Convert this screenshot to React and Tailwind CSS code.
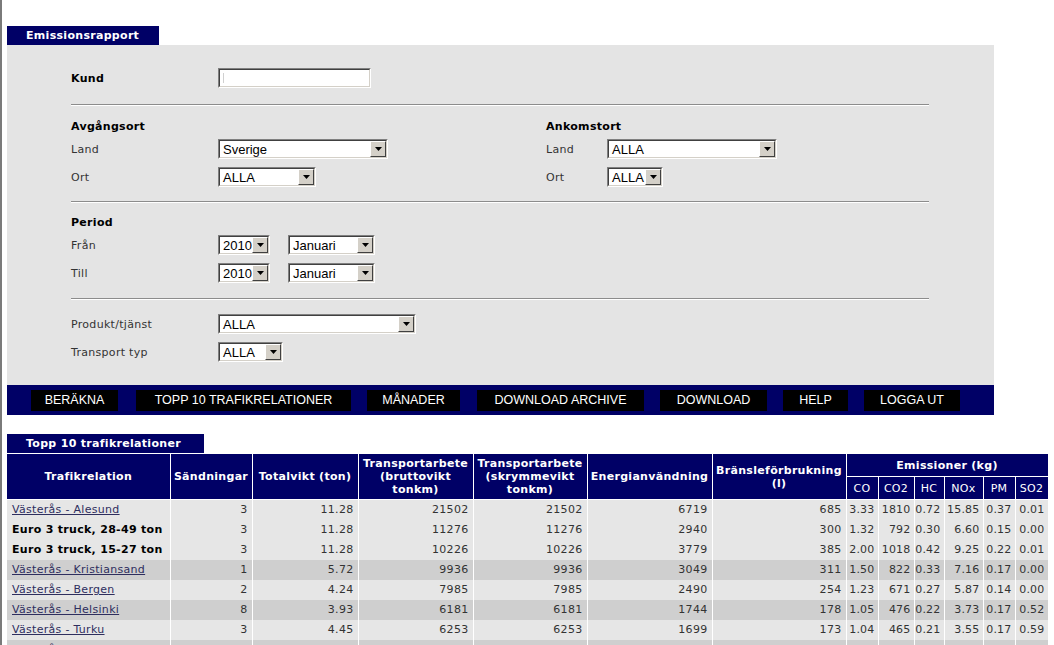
import React from "react";

function Select({ w, text }) {
  return (
    <div className={"h-[20px] border border-t-[#808080] border-l-[#808080] border-b-white border-r-white " + w}>
      <div className="flex h-full border border-t-[#404040] border-l-[#404040] border-b-[#d4d0c8] border-r-[#d4d0c8] bg-white">
        <span className="flex-1 overflow-hidden whitespace-nowrap pl-[3px] font-['Liberation_Sans',sans-serif] text-[13px] leading-[17px] tracking-normal text-black">
          {text}
        </span>
        <div className="flex h-[16px] w-[16px] shrink-0 items-center justify-center border border-t-white border-l-white border-b-[#404040] border-r-[#404040] bg-[#d4d0c8]">
          <svg width="7" height="4" viewBox="0 0 7 4">
            <path d="M0 0h7L3.5 4z" fill="#000" />
          </svg>
        </div>
      </div>
    </div>
  );
}

function Hr() {
  return <div className="h-[2px] w-[858px] border-t border-t-[#8c8c8c] border-b border-b-white" />;
}

function Row({ label, children, labelW = "w-[147px]" }) {
  return (
    <div className="flex h-[20px] items-center">
      <div className={"shrink-0 pt-[2px] text-[11px] text-[#333] " + labelW}>{label}</div>
      {children}
    </div>
  );
}

const buttons = [
  { t: "BERÄKNA", c: "w-[87px]" },
  { t: "TOPP 10 TRAFIKRELATIONER", c: "w-[215px] ml-[18px]" },
  { t: "MÅNADER", c: "w-[93px] ml-[16px]" },
  { t: "DOWNLOAD ARCHIVE", c: "w-[167px] ml-[17px]" },
  { t: "DOWNLOAD", c: "w-[107px] ml-[16px]" },
  { t: "HELP", c: "w-[65px] ml-[16px]" },
  { t: "LOGGA UT", c: "w-[96px] ml-[16px]" },
];

const rows = [
  { n: "Västerås - Alesund", link: true, dark: false, v: ["3", "11.28", "21502", "21502", "6719", "685", "3.33", "1810", "0.72", "15.85", "0.37", "0.01"] },
  { n: "Euro 3 truck, 28-49 ton", link: false, dark: false, v: ["3", "11.28", "11276", "11276", "2940", "300", "1.32", "792", "0.30", "6.60", "0.15", "0.00"] },
  { n: "Euro 3 truck, 15-27 ton", link: false, dark: false, v: ["3", "11.28", "10226", "10226", "3779", "385", "2.00", "1018", "0.42", "9.25", "0.22", "0.01"] },
  { n: "Västerås - Kristiansand", link: true, dark: true, v: ["1", "5.72", "9936", "9936", "3049", "311", "1.50", "822", "0.33", "7.16", "0.17", "0.00"] },
  { n: "Västerås - Bergen", link: true, dark: false, v: ["2", "4.24", "7985", "7985", "2490", "254", "1.23", "671", "0.27", "5.87", "0.14", "0.00"] },
  { n: "Västerås - Helsinki", link: true, dark: true, v: ["8", "3.93", "6181", "6181", "1744", "178", "1.05", "476", "0.22", "3.73", "0.17", "0.52"] },
  { n: "Västerås - Turku", link: true, dark: false, v: ["3", "4.45", "6253", "6253", "1699", "173", "1.04", "465", "0.21", "3.55", "0.17", "0.59"] },
  { n: "Västerås - Tallinn", link: true, dark: true, v: ["2", "3.10", "5120", "5120", "1420", "145", "0.85", "380", "0.18", "2.90", "0.14", "0.40"] },
];

const th = "bg-[#000066] border border-white text-white font-bold text-[11px] leading-[13px] text-center align-middle px-0";
const thSub = "bg-[#000066] border border-white text-white font-normal text-[11px] leading-[13px] text-center align-middle px-0";

export default function App() {
  return (
    <div className="h-[645px] w-full overflow-hidden border-l-2 border-l-[#7a7a7a] bg-white pl-[5px] pt-[26px] font-['DejaVu_Sans',Verdana,sans-serif] tracking-[0.3px]">
      {/* Tab */}
      <div className="flex h-[19px] w-[152px] items-center bg-[#000066] pl-[19px] pt-[1px] text-[11px] font-bold text-white">
        Emissionsrapport
      </div>

      {/* Gray panel */}
      <div className="h-[340px] w-[987px] bg-[#e4e4e4] pl-[64px] pt-[23px]">
        <div className="flex h-[20px] items-center">
          <div className="w-[147px] pt-[2px] text-[11px] font-bold text-black">Kund</div>
          <div className="h-[20px] w-[153px] border border-t-[#808080] border-l-[#808080] border-b-white border-r-white">
            <div className="flex h-full items-center border border-t-[#404040] border-l-[#404040] border-b-[#d4d0c8] border-r-[#d4d0c8] bg-white pl-[3px]">
              <div className="h-[10px] w-px bg-[#d0d0d0]" />
            </div>
          </div>
        </div>

        <div className="mt-[16px]">
          <Hr />
        </div>

        <div className="flex">
          <div className="w-[475px]">
            <div className="mt-[10px] flex h-[20px] items-center pt-[2px] text-[11px] font-bold text-black">Avgångsort</div>
            <div className="mt-[3px]">
              <Row label="Land">
                <Select w="w-[170px]" text="Sverige" />
              </Row>
            </div>
            <div className="mt-[8px]">
              <Row label="Ort">
                <Select w="w-[98px]" text="ALLA" />
              </Row>
            </div>
          </div>
          <div>
            <div className="mt-[10px] flex h-[20px] items-center pt-[2px] text-[11px] font-bold text-black">Ankomstort</div>
            <div className="mt-[3px]">
              <Row label="Land" labelW="w-[61px]">
                <Select w="w-[170px]" text="ALLA" />
              </Row>
            </div>
            <div className="mt-[8px]">
              <Row label="Ort" labelW="w-[61px]">
                <Select w="w-[56px]" text="ALLA" />
              </Row>
            </div>
          </div>
        </div>

        <div className="mt-[14px]">
          <Hr />
        </div>

        <div className="mt-[9px] flex h-[20px] items-center pt-[2px] text-[11px] font-bold text-black">Period</div>
        <div className="mt-[3px]">
          <Row label="Från">
            <Select w="w-[52px]" text="2010" />
            <div className="ml-[18px]">
              <Select w="w-[87px]" text="Januari" />
            </div>
          </Row>
        </div>
        <div className="mt-[8px]">
          <Row label="Till">
            <Select w="w-[52px]" text="2010" />
            <div className="ml-[18px]">
              <Select w="w-[87px]" text="Januari" />
            </div>
          </Row>
        </div>

        <div className="mt-[15px]">
          <Hr />
        </div>

        <div className="mt-[14px]">
          <Row label="Produkt/tjänst">
            <Select w="w-[198px]" text="ALLA" />
          </Row>
        </div>
        <div className="mt-[8px]">
          <Row label="Transport typ">
            <Select w="w-[65px]" text="ALLA" />
          </Row>
        </div>
      </div>

      {/* Button bar */}
      <div className="flex h-[30px] w-[987px] items-start bg-[#000066] pl-[24px] pt-[5px]">
        {buttons.map((b) => (
          <div
            key={b.t}
            className={"flex h-[21px] shrink-0 items-center justify-center bg-black font-['Liberation_Sans',Arial,sans-serif] text-[12.5px] tracking-normal text-white " + b.c}
          >
            {b.t}
          </div>
        ))}
      </div>

      {/* Second tab */}
      <div className="mt-[19px] flex h-[19px] w-[197px] items-center bg-[#000066] pl-[19px] pt-[1px] text-[11px] font-bold text-white">
        Topp 10 trafikrelationer
      </div>

      {/* Table */}
      <table className="w-[1041px] table-fixed border-collapse">
        <colgroup>
          <col className="w-[163px]" />
          <col className="w-[82px]" />
          <col className="w-[106px]" />
          <col className="w-[115px]" />
          <col className="w-[114px]" />
          <col className="w-[125px]" />
          <col className="w-[134px]" />
          <col className="w-[32px]" />
          <col className="w-[36px]" />
          <col className="w-[30px]" />
          <col className="w-[39px]" />
          <col className="w-[32px]" />
          <col className="w-[33px]" />
        </colgroup>
        <thead>
          <tr className="h-[23px]">
            <th rowSpan={2} className={th + " border-l-0"}>Trafikrelation</th>
            <th rowSpan={2} className={th}>Sändningar</th>
            <th rowSpan={2} className={th}>Totalvikt (ton)</th>
            <th rowSpan={2} className={th}>Transportarbete<br />(bruttovikt<br />tonkm)</th>
            <th rowSpan={2} className={th}>Transportarbete<br />(skrymmevikt<br />tonkm)</th>
            <th rowSpan={2} className={th}>Energianvändning</th>
            <th rowSpan={2} className={th}>Bränsleförbrukning<br />(l)</th>
            <th colSpan={6} className={th}>Emissioner (kg)</th>
          </tr>
          <tr className="h-[23px]">
            {["CO", "CO2", "HC", "NOx", "PM", "SO2"].map((h) => (
              <th key={h} className={thSub}>{h}</th>
            ))}
          </tr>
        </thead>
        <tbody>
          {rows.map((r) => (
            <tr key={r.n} className={"h-[20px] " + (r.dark ? "bg-[#cfcfcf]" : "bg-[#e6e6e6]")}>
              <td className="whitespace-nowrap border-r border-r-white pl-[5px] pt-[1px] text-[11px] leading-[14px]">
                {r.link ? (
                  <a href="#" className="text-[#2e2e5e] underline">{r.n}</a>
                ) : (
                  <span className="font-bold text-black">{r.n}</span>
                )}
              </td>
              {r.v.map((x, i) => (
                <td
                  key={i}
                  className={
                    "whitespace-nowrap border-x border-x-white pt-[1px] text-right text-[11px] leading-[14px] text-[#333] " +
                    (i >= 6 ? "pr-[3px] tracking-[0.2px]" : "pr-[4px]")
                  }
                >
                  {x}
                </td>
              ))}
            </tr>
          ))}
        </tbody>
      </table>
    </div>
  );
}
